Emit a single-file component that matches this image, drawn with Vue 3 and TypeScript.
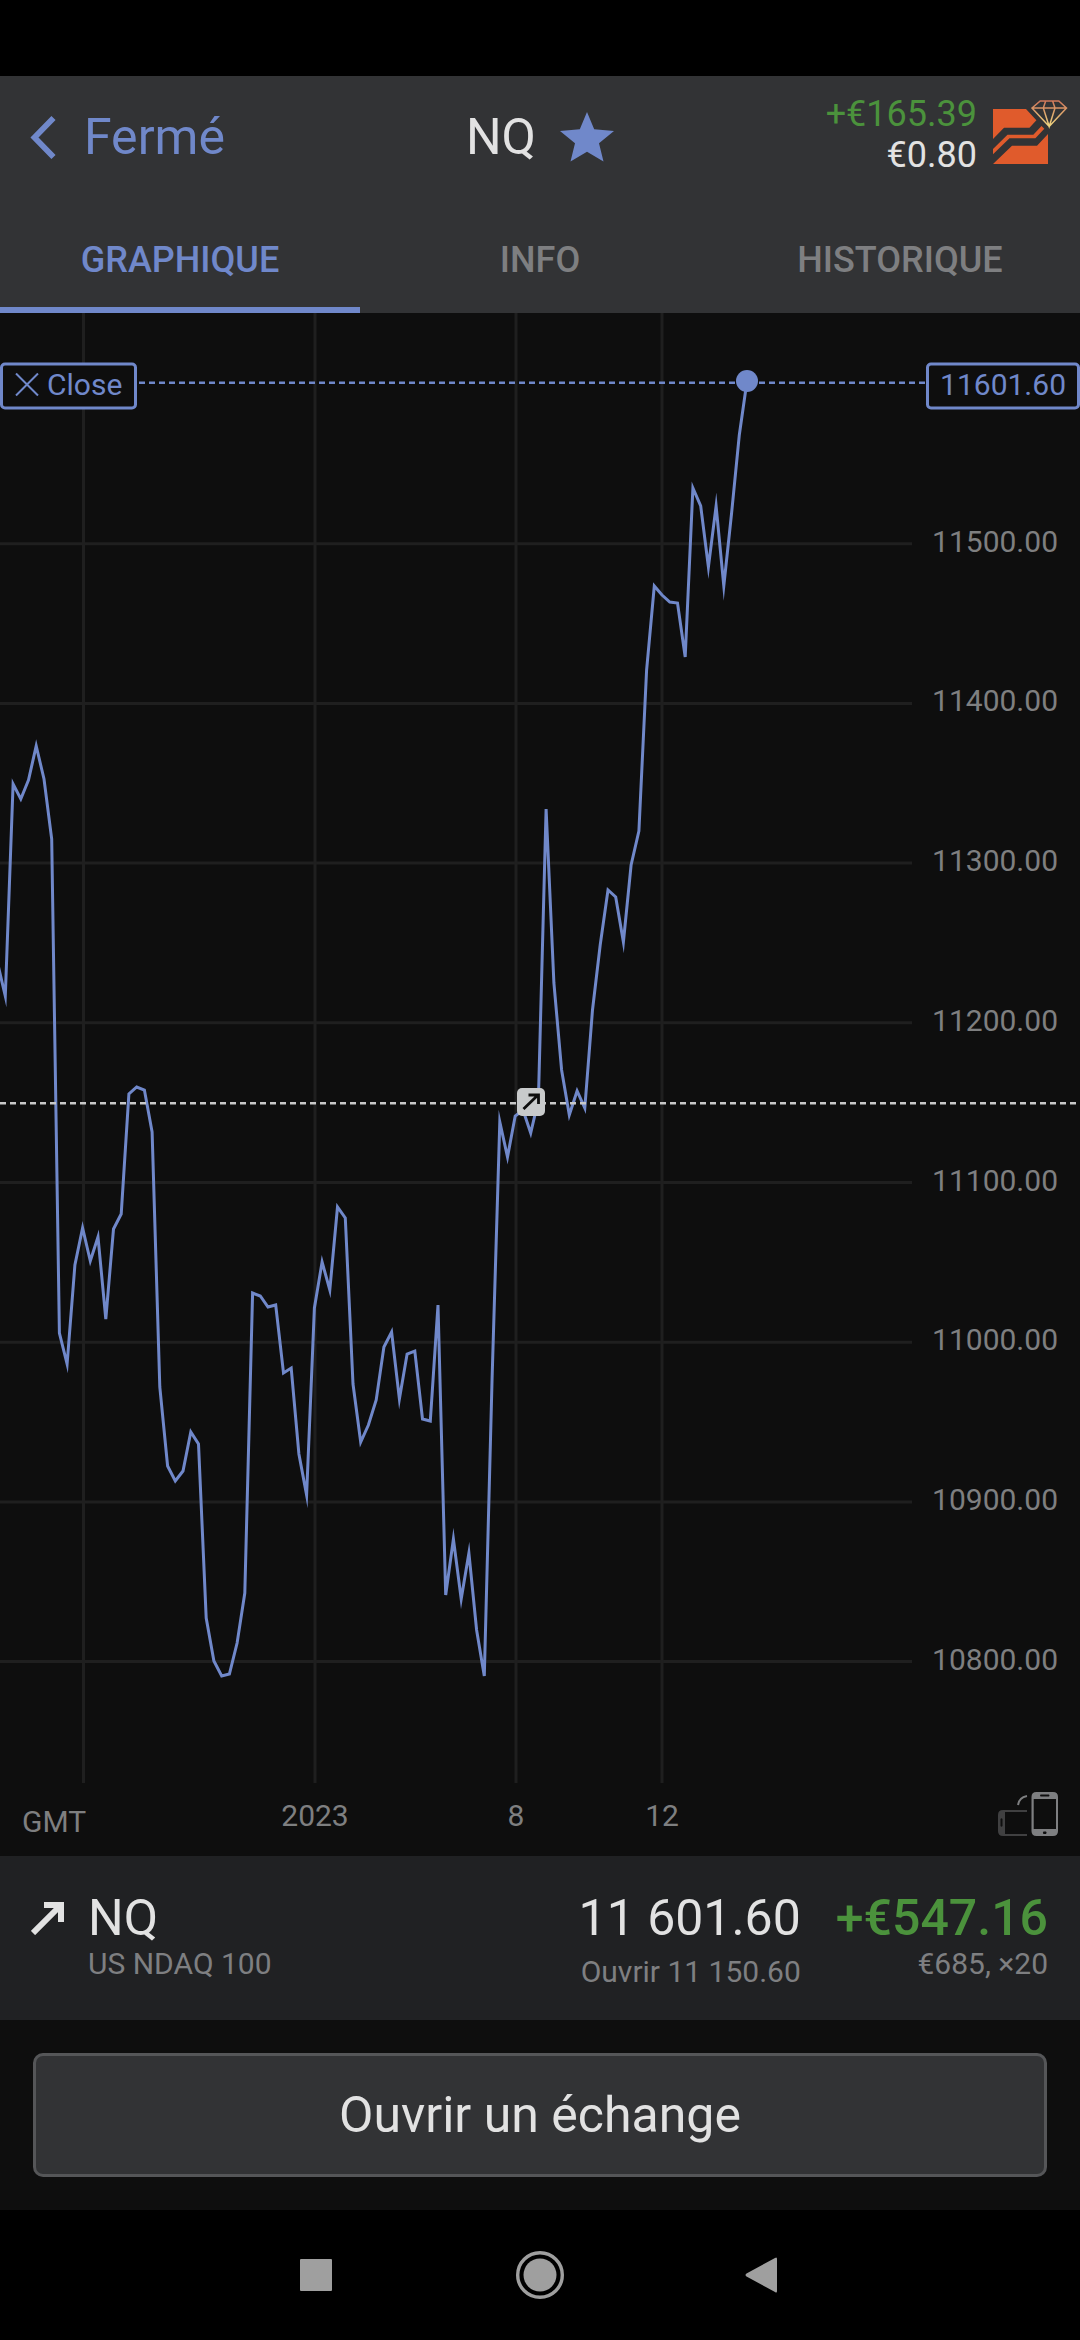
<script setup lang="ts">
import { computed, ref } from 'vue'

interface Tick {
  label: string
  at: number
}

const tabs = ['GRAPHIQUE', 'INFO', 'HISTORIQUE']
const active = ref(0)

// Plot space: the chart is drawn in these units and stretched to its container.
const plot = { top: 313, width: 1080, height: 1543, gridRight: 912, gridBottom: 1783 }

const firstX = -2.4
const stepX = 7.726
const samples: number[] = [
  963, 996, 784, 799, 780, 746, 779, 839, 1333, 1364, 1265, 1228, 1261, 1237, 1319, 1229,
  1214, 1094, 1087, 1090, 1132, 1387, 1466, 1481, 1471, 1432, 1444, 1618, 1661, 1676, 1674,
  1643, 1593, 1293, 1296, 1307, 1305, 1373, 1368, 1454, 1495, 1308, 1262, 1290, 1207, 1218,
  1384, 1442, 1425, 1400, 1347, 1332, 1399, 1354, 1351, 1419, 1421, 1305, 1595, 1539, 1599,
  1553, 1630, 1676, 1378, 1122, 1157, 1116, 1110, 1133, 1100, 809, 983, 1070, 1115, 1091,
  1108, 1010, 945, 890, 897, 942, 865, 831, 670, 586, 595, 602, 603, 657, 488, 506, 567,
  506, 586, 513, 435, 381,
]

const linePoints = computed(() =>
  samples.map((y, i) => `${(firstX + i * stepX).toFixed(1)},${y}`).join(' '),
)

const priceTicks: Tick[] = Array.from({ length: 8 }, (_, i) => ({
  label: `${11500 - i * 100}.00`,
  at: 543.7 + i * 159.7,
}))

const timeTicks: Tick[] = [
  { label: '', at: 83.5 },
  { label: '2023', at: 315 },
  { label: '8', at: 516 },
  { label: '12', at: 662 },
]

const pctX = (x: number) => `${(x / plot.width) * 100}%`
const pctY = (y: number) => `${((y - plot.top) / plot.height) * 100}%`
</script>

<template>
  <div class="screen">
    <div class="status"></div>

    <header class="header">
      <div class="title-row">
        <a class="back" href="#">
          <svg width="26" height="44" viewBox="0 0 26 44" aria-hidden="true">
            <path d="M23.500 3L4.500 22.500L23.500 42" fill="none" stroke="currentColor" stroke-width="5.800" />
          </svg>
          <span>Fermé</span>
        </a>
        <div class="symbol">
          <h1>NQ</h1>
          <button class="star" type="button" aria-label="Favori">
            <svg width="54" height="50" viewBox="0 0 54 50" aria-hidden="true">
              <path
                d="M27 0L34.200 17.200L54 18.900L39 31.200L43.500 49.500L27 39.800L10.500 49.500L15 31.200L0 18.900L19.800 17.200Z"
                fill="currentColor"
              />
            </svg>
          </button>
        </div>
        <div class="account">
          <div class="amounts">
            <span class="gain">+€165.39</span>
            <span>€0.80</span>
          </div>
          <svg width="75" height="66" viewBox="0 0 75 66" aria-hidden="true">
            <defs>
              <linearGradient id="gem" gradientUnits="userSpaceOnUse" x1="0" y1="0" x2="0" y2="28">
                <stop offset="0" stop-color="#cf7459" />
                <stop offset="1" stop-color="#f0dc82" />
              </linearGradient>
            </defs>
            <g fill="#e05b2c">
              <path d="M0 9H33L43.400 20.300L36.500 27.700H11L0 39Z" />
              <path d="M0 49L14.500 34.700H40.300L48.500 26L51.300 28.700L42.400 38.300H16.500L0 54.300Z" />
              <path d="M0 64L19 45.700H44L55 34V64Z" />
            </g>
            <path
              d="M39 8L47.200 1H65.800L73.500 8L56.200 26.500ZM39 8H73.500M52.700 1L50.300 8L56.200 26.500L62 8L59.600 1"
              fill="none"
              stroke="url(#gem)"
              stroke-width="1.500"
            />
          </svg>
        </div>
      </div>
      <nav class="tabs" role="tablist">
        <button
          v-for="(tab, i) in tabs"
          :key="tab"
          type="button"
          role="tab"
          class="tab"
          :class="{ active: active === i }"
          :aria-selected="active === i"
          @click="active = i"
        >
          {{ tab }}
        </button>
      </nav>
    </header>

    <main class="chart">
      <svg class="plot" viewBox="0 313 1080 1543" preserveAspectRatio="none" aria-hidden="true">
        <g stroke="#1f1f1f" stroke-width="3">
          <line v-for="t in priceTicks" :key="t.at" x1="0" :x2="plot.gridRight" :y1="t.at" :y2="t.at" />
          <line v-for="t in timeTicks" :key="t.at" :x1="t.at" :x2="t.at" :y1="plot.top" :y2="plot.gridBottom" />
        </g>
        <polyline
          :points="linePoints"
          fill="none"
          stroke="#7088ca"
          stroke-width="3"
          stroke-miterlimit="10"
        />
        <line x1="139" x2="926" y1="382.7" y2="382.7" stroke="#7088ca" stroke-width="2.500" stroke-dasharray="6 4" />
        <line x1="0" x2="1080" y1="1103.2" y2="1103.2" stroke="#c8c8c8" stroke-width="2.500" stroke-dasharray="6 4" />
      </svg>

      <span
        v-for="t in priceTicks"
        :key="t.label"
        class="price-label"
        :style="{ top: pctY(t.at) }"
      >{{ t.label }}</span>
      <span
        v-for="t in timeTicks"
        :key="t.label"
        class="time-label"
        :style="{ left: pctX(t.at) }"
      >{{ t.label }}</span>
      <span class="zone">GMT</span>

      <span class="dot" :style="{ left: pctX(747), top: pctY(381) }"></span>
      <span class="marker" :style="{ left: pctX(531), top: pctY(1102) }">
        <svg width="28" height="28" viewBox="0 0 28 28" aria-hidden="true">
          <path d="M6.500 21L20.500 7.500M11.500 7H21.500V16" fill="none" stroke="#0e0e0e" stroke-width="2.800" />
        </svg>
      </span>

      <button class="tag close" type="button" :style="{ top: pctY(385.5) }">
        <svg width="24" height="24" viewBox="0 0 24 24" aria-hidden="true">
          <path d="M1 1L23 23M23 1L1 23" stroke="currentColor" stroke-width="2" />
        </svg>
        <span>Close</span>
      </button>
      <span class="tag current" :style="{ top: pctY(385.5) }">11601.60</span>

      <button class="rotate" type="button" aria-label="Pivoter">
        <svg width="60" height="44" viewBox="0 0 60 44" aria-hidden="true">
          <path
            d="M29 18H5Q0 18 0 23V39Q0 44 5 44H29V42H7V20H29ZM2.500 27Q3.500 25.500 4.500 27V34Q3.500 35.500 2.500 34Z"
            fill="#404041"
            fill-rule="evenodd"
          />
          <path d="M20 13Q21 5.500 29 4" fill="none" stroke="#7e7f81" stroke-width="2" />
          <path
            d="M38.500 0H55Q60 0 60 5V39Q60 44 55 44H38.500Q33.500 44 33.500 39V5Q33.500 0 38.500 0ZM35.700 7V37H58V7ZM42.500 2.500Q41.500 3.500 42.500 4.500H51Q52 3.500 51 2.500ZM45.500 39.500Q44.200 40.700 45.500 42H48Q49.300 40.700 48 39.500Z"
            fill="#7e7f81"
            fill-rule="evenodd"
          />
        </svg>
      </button>
    </main>

    <section class="position">
      <svg class="trend" width="33" height="33" viewBox="0 0 33 33" aria-hidden="true">
        <path d="M2 31L29 4M13 3H30V20" fill="none" stroke="currentColor" stroke-width="6" />
      </svg>
      <div class="instrument">
        <span class="big">NQ</span>
        <span class="small">US NDAQ 100</span>
      </div>
      <div class="quote">
        <span class="big">11 601.60</span>
        <span class="small">Ouvrir 11 150.60</span>
      </div>
      <div class="result">
        <span class="big profit">+€547.16</span>
        <span class="small">€685, ×20</span>
      </div>
    </section>

    <div class="action">
      <button class="open" type="button">Ouvrir un échange</button>
    </div>

    <nav class="system">
      <button type="button" aria-label="Récents">
        <svg width="48" height="50" viewBox="0 0 48 50" aria-hidden="true">
          <rect x="7" y="9" width="32" height="32" rx="1" fill="currentColor" />
        </svg>
      </button>
      <button type="button" aria-label="Accueil">
        <svg width="48" height="50" viewBox="0 0 48 50" aria-hidden="true">
          <circle cx="24" cy="25" r="22.300" fill="none" stroke="currentColor" stroke-width="3.400" />
          <circle cx="24" cy="25" r="16.500" fill="currentColor" />
        </svg>
      </button>
      <button type="button" aria-label="Retour">
        <svg width="48" height="50" viewBox="0 0 48 50" aria-hidden="true">
          <path
            d="M36 8Q38 6.500 38 9V41Q38 43.500 36 42L7.500 26.500Q5.500 25 7.500 23.500Z"
            fill="currentColor"
          />
        </svg>
      </button>
    </nav>
  </div>
</template>

<style>
body {
  background: #000;
}
</style>

<style scoped>
.screen {
  display: flex;
  flex-direction: column;
  min-height: 100vh;
  color: #e2e2e2;
  background: #0e0e0e;
  font-family: Roboto, "Noto Sans", sans-serif;
}

svg {
  display: block;
  flex: none;
}

button {
  padding: 0;
  border: 0;
  color: inherit;
  background: none;
  font: inherit;
}

.status {
  height: 76px;
  background: #000;
}

.header {
  background: #323335;
}

.title-row {
  display: grid;
  grid-template-columns: 1fr auto 1fr;
  align-items: center;
  height: 122px;
}

.back {
  display: flex;
  align-items: center;
  gap: 28px;
  padding-left: 30px;
  color: #7088ca;
  font-size: 50px;
  line-height: 58px;
  text-decoration: none;
}

.symbol {
  display: flex;
  align-items: center;
  gap: 24px;
}

.symbol h1 {
  margin: 0;
  font-size: 50px;
  font-weight: 400;
  line-height: 58px;
}

.star {
  color: #7088ca;
}

.account {
  display: flex;
  align-items: flex-start;
  justify-content: flex-end;
  gap: 16px;
  padding: 0 12px 4px 0;
}

.amounts {
  display: flex;
  flex-direction: column;
  align-items: flex-end;
  font-size: 36px;
  line-height: 41px;
}

.account svg {
  margin-top: 6px;
}

.gain {
  color: #4b923c;
}

.tabs {
  display: grid;
  grid-template-columns: repeat(3, 1fr);
  height: 115px;
}

.tab {
  padding-top: 14px;
  border-bottom: 6px solid transparent;
  color: #7e7f81;
  font-size: 36px;
  font-weight: 500;
  line-height: 42px;
}

.tab.active {
  border-color: #7088ca;
  color: #7088ca;
}

.chart {
  position: relative;
  flex: 1;
  min-height: 600px;
  overflow: hidden;
  color: #7e7f80;
  font-size: 30px;
  line-height: 34px;
}

.plot {
  position: absolute;
  width: 100%;
  height: 100%;
}

.price-label {
  position: absolute;
  right: 22px;
  padding-bottom: 4px;
  transform: translateY(-50%);
}

.time-label {
  position: absolute;
  bottom: 23px;
  transform: translateX(-50%);
}

.zone {
  position: absolute;
  bottom: 17px;
  left: 22px;
}

.dot {
  position: absolute;
  width: 22px;
  height: 22px;
  border-radius: 50%;
  background: #7088ca;
  transform: translate(-50%, -50%);
}

.marker {
  position: absolute;
  border-radius: 5px;
  background: #c8cacb;
  transform: translate(-50%, -50%);
}

.tag {
  position: absolute;
  display: flex;
  align-items: center;
  box-sizing: border-box;
  height: 47px;
  border: 3px solid #7088ca;
  border-radius: 5px;
  color: #7088ca;
  background: #0e0e0e;
  transform: translateY(-50%);
}

.close {
  left: 0;
  gap: 8px;
  padding: 0 12px 2px;
}

.current {
  right: 0;
  padding: 0 11px 2px;
}

.rotate {
  position: absolute;
  right: 22px;
  bottom: 20px;
}

.position {
  display: flex;
  align-items: flex-start;
  padding: 33px 32px 31px 31px;
  background: #202123;
}

.trend {
  margin: 13px 24px 0 0;
}

.instrument,
.quote,
.result {
  display: flex;
  flex-direction: column;
}

.instrument {
  flex: 1;
}

.quote,
.result {
  align-items: flex-end;
}

.quote {
  gap: 8px;
  margin-right: 35px;
}

.big {
  font-size: 50px;
  line-height: 58px;
}

.small {
  color: #7e7f81;
  font-size: 30px;
  line-height: 34px;
}

.profit {
  color: #4b923c;
  font-weight: 500;
}

.action {
  padding: 33px;
}

.open {
  display: block;
  box-sizing: border-box;
  width: 100%;
  height: 124px;
  border: 3px solid #555658;
  border-radius: 10px;
  background: #323335;
  font-size: 50px;
  line-height: 58px;
}

.system {
  display: flex;
  align-items: center;
  justify-content: center;
  gap: 175px;
  height: 130px;
  color: #9f9f9f;
  background: #000;
}
</style>
